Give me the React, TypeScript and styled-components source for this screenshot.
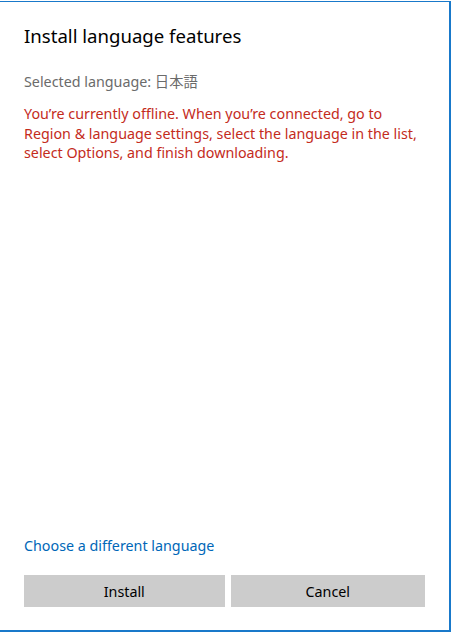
import React from "react";
import styled, { createGlobalStyle } from "styled-components";

const GlobalStyle = createGlobalStyle`
  html, body {
    margin: 0;
    padding: 0;
    background: #ffffff;
  }
  body {
    font-family: "Noto Sans", "Open Sans", "Noto Sans CJK JP", sans-serif;
  }
`;

const Page = styled.div`
  padding-top: 1px;
  width: 451px;
  height: 633px;
  box-sizing: border-box;
`;

const Dialog = styled.div`
  box-sizing: border-box;
  width: 451px;
  height: 631px;
  border-top: 1px solid #1979ca;
  border-right: 2px solid #1979ca;
  border-bottom: 2px solid #1979ca;
  padding: 20px 24px 23px 24px;
  display: flex;
  flex-direction: column;
`;

const Title = styled.h1`
  margin: 0;
  font-size: 18.6px;
  line-height: 28px;
  font-weight: 400;
  color: #000000;
`;

const Selected = styled.div`
  margin-top: 22px;
  font-size: 14.3px;
  line-height: 20px;
  color: #6b6b6b;
`;

const Warning = styled.p`
  margin: 12px 0 0 0;
  font-size: 14.3px;
  line-height: 19.5px;
  color: #c42b1c;
`;

const Spacer = styled.div`
  flex: 1;
`;

const LinkText = styled.a`
  font-size: 14.3px;
  line-height: 20px;
  color: #0067b8;
  text-decoration: none;
  cursor: pointer;
`;

const Buttons = styled.div`
  display: flex;
  gap: 6px;
  margin-top: 19px;
`;

const Button = styled.button<{ $w: number }>`
  width: ${(p) => p.$w}px;
  height: 32px;
  border: none;
  background: #cccccc;
  font-family: inherit;
  font-size: 14.3px;
  color: #000000;
  padding: 0;
`;

export default function App() {
  return (
    <>
      <GlobalStyle />
      <Page>
        <Dialog>
          <Title>Install language features</Title>
          <Selected>Selected language: 日本語</Selected>
          <Warning>
            You’re currently offline. When you’re connected, go to Region &amp;
            language settings, select the language in the list, select Options,
            and finish downloading.
          </Warning>
          <Spacer />
          <div>
            <LinkText>Choose a different language</LinkText>
          </div>
          <Buttons>
            <Button $w={201}>Install</Button>
            <Button $w={195}>Cancel</Button>
          </Buttons>
        </Dialog>
      </Page>
    </>
  );
}
